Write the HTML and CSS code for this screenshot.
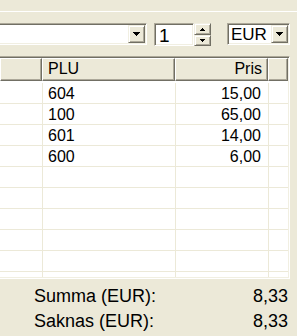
FILE: index.html
```html
<!DOCTYPE html>
<html lang="lv">
<head>
    <meta charset="UTF-8">
    <meta name="viewport" content="width=device-width, initial-scale=1.0">
    <title>Kase</title>
    <link rel="stylesheet" href="styles.css">
</head>
<body>
    <div class="topbar"></div>

    <div class="toolbar">
        <div class="combo product-combo">
            <div class="combo-field"></div>
            <div class="drop-btn">
                <svg width="7" height="4" viewBox="0 0 7 4"><path d="M0 0h7v1H0zM1 1h5v1H1zM2 2h3v1H2zM3 3h1v1H3z" fill="#000"/></svg>
            </div>
        </div>

        <div class="spin">
            <div class="spin-field">1</div>
            <div class="spin-btns">
                <div class="spin-btn up">
                    <svg width="5" height="3" viewBox="0 0 5 3"><path d="M2 0h1v1H2zM1 1h3v1H1zM0 2h5v1H0z" fill="#000"/></svg>
                </div>
                <div class="spin-btn down">
                    <svg width="5" height="3" viewBox="0 0 5 3"><path d="M0 0h5v1H0zM1 1h3v1H1zM2 2h1v1H2z" fill="#000"/></svg>
                </div>
            </div>
        </div>

        <div class="combo currency-combo">
            <div class="combo-field">EUR</div>
            <div class="drop-btn">
                <svg width="7" height="4" viewBox="0 0 7 4"><path d="M0 0h7v1H0zM1 1h5v1H1zM2 2h3v1H2zM3 3h1v1H3z" fill="#000"/></svg>
            </div>
        </div>
    </div>

    <div class="list">
        <div class="list-head">
            <div class="head-cell col-name"></div>
            <div class="head-cell col-plu">PLU</div>
            <div class="head-cell col-price">Pris</div>
            <div class="head-cell col-rest"></div>
        </div>
        <div class="list-body">
            <div class="row"><div class="cell col-name"></div><div class="cell col-plu">604</div><div class="cell col-price">15,00</div><div class="cell col-rest"></div></div>
            <div class="row"><div class="cell col-name"></div><div class="cell col-plu">100</div><div class="cell col-price">65,00</div><div class="cell col-rest"></div></div>
            <div class="row"><div class="cell col-name"></div><div class="cell col-plu">601</div><div class="cell col-price">14,00</div><div class="cell col-rest"></div></div>
            <div class="row"><div class="cell col-name"></div><div class="cell col-plu">600</div><div class="cell col-price">6,00</div><div class="cell col-rest"></div></div>
            <div class="row"><div class="cell col-name"></div><div class="cell col-plu"></div><div class="cell col-price"></div><div class="cell col-rest"></div></div>
            <div class="row"><div class="cell col-name"></div><div class="cell col-plu"></div><div class="cell col-price"></div><div class="cell col-rest"></div></div>
            <div class="row"><div class="cell col-name"></div><div class="cell col-plu"></div><div class="cell col-price"></div><div class="cell col-rest"></div></div>
            <div class="row"><div class="cell col-name"></div><div class="cell col-plu"></div><div class="cell col-price"></div><div class="cell col-rest"></div></div>
            <div class="row"><div class="cell col-name"></div><div class="cell col-plu"></div><div class="cell col-price"></div><div class="cell col-rest"></div></div>
            <div class="row"><div class="cell col-name"></div><div class="cell col-plu"></div><div class="cell col-price"></div><div class="cell col-rest"></div></div>
        </div>
    </div>

    <div class="totals">
        <div class="total-row"><span>Summa (EUR):</span><span>8,33</span></div>
        <div class="total-row"><span>Saknas (EUR):</span><span>8,33</span></div>
    </div>
</body>
</html>
```

FILE: styles.css
```css
body {
    margin: 0;
    width: 297px;
    height: 336px;
    overflow: hidden;
    background-color: #ECE9D8; /* classic button face */
    font-family: "Liberation Sans", Arial, sans-serif;
    color: #000;
}

.topbar {
    height: 11px;
    border-bottom: 1px solid #fff;
}

/* toolbar with combos and the quantity spinner */
.toolbar {
    display: flex;
    align-items: flex-start;
    margin-top: 11px;
    height: 23px;
}

.combo {
    box-sizing: border-box;
    height: 22px;
    display: flex;
    padding: 1px;
    background-color: #fff;
    border: 1px solid;
    border-color: #ACA899 #fff #fff #ACA899;
    box-shadow: inset 1px 1px #716F64, inset -1px -1px #F1EFE2;
}

.product-combo {
    width: 157px;
    margin-left: -10px;
}

.currency-combo {
    width: 63px;
    margin-left: 16px;
}

.combo-field {
    flex: 1;
    height: 18px;
    padding-left: 2px;
    font-size: 17px;
    line-height: 19px;
    overflow: hidden;
}

.drop-btn {
    box-sizing: border-box;
    width: 17px;
    height: 18px;
    display: flex;
    align-items: center;
    justify-content: center;
    background-color: #ECE9D8;
    border: 1px solid;
    border-color: #F1EFE2 #716F64 #716F64 #F1EFE2;
    box-shadow: inset 1px 1px #fff, inset -1px -1px #ACA899;
}

.drop-btn svg,
.spin-btn svg {
    display: block;
}

.spin {
    display: flex;
    margin-left: 7px;
}

.spin-field {
    box-sizing: border-box;
    width: 40px;
    height: 23px;
    padding: 2px 0 0 4px;
    background-color: #fff;
    border: 1px solid;
    border-color: #ACA899 #fff #fff #ACA899;
    box-shadow: inset 1px 1px #716F64, inset -1px -1px #F1EFE2;
    font-size: 19px;
    line-height: 19px;
}

.spin-btns {
    width: 17px;
    display: flex;
    flex-direction: column;
}

.spin-btn {
    box-sizing: border-box;
    display: flex;
    align-items: center;
    justify-content: center;
    background-color: #ECE9D8;
    border: 1px solid;
    border-color: #F1EFE2 #716F64 #716F64 #F1EFE2;
    box-shadow: inset 1px 1px #fff, inset -1px -1px #ACA899;
}

.spin-btn.up {
    height: 12px;
}

.spin-btn.down {
    height: 11px;
}

/* list view */
.list {
    box-sizing: border-box;
    width: 290px;
    height: 223px;
    margin-top: 10px;
    padding: 1px 1px 1px 0;
    background-color: #fff;
    border: 1px solid;
    border-left: none;
    border-color: #ACA899 #fff #fff;
    box-shadow: inset 0 1px #716F64, inset -1px -1px #F1EFE2;
    display: flex;
    flex-direction: column;
}

.list-head {
    display: flex;
    height: 23px;
    font-size: 16px;
    line-height: 20px;
}

.head-cell {
    box-sizing: border-box;
    height: 23px;
    background-color: #ECE9D8;
    border: 1px solid;
    border-color: #fff #716F64 #716F64 #fff;
    box-shadow: inset -1px -1px #ACA899;
    white-space: nowrap;
    overflow: hidden;
}

.list-head .col-name { width: 42px; }
.list-head .col-plu { width: 133px; padding-left: 5px; }
.list-head .col-price { width: 93px; padding-right: 5px; text-align: right; }
.list-head .col-rest { width: 20px; }

.list-body {
    flex: 1;
    overflow: hidden;
    padding-top: 2px;
    font-size: 16px;
}

.row {
    display: flex;
    height: 21px;
    box-sizing: border-box;
    border-bottom: 1px solid #ECE9D8;
}

.cell {
    box-sizing: border-box;
    height: 20px;
    padding-top: 1px;
    line-height: 19px;
    white-space: nowrap;
    border-right: 1px solid #ECE9D8;
}

.row .col-name { width: 43px; }
.row .col-plu { width: 133px; padding-left: 5px; }
.row .col-price { width: 93px; padding-right: 7px; text-align: right; }
.row .col-rest { width: 19px; border-right: none; }

/* totals under the list */
.totals {
    padding: 5px 9px 0 34px;
    font-size: 18px;
    line-height: 25px;
}

.total-row {
    display: flex;
    justify-content: space-between;
}
```
